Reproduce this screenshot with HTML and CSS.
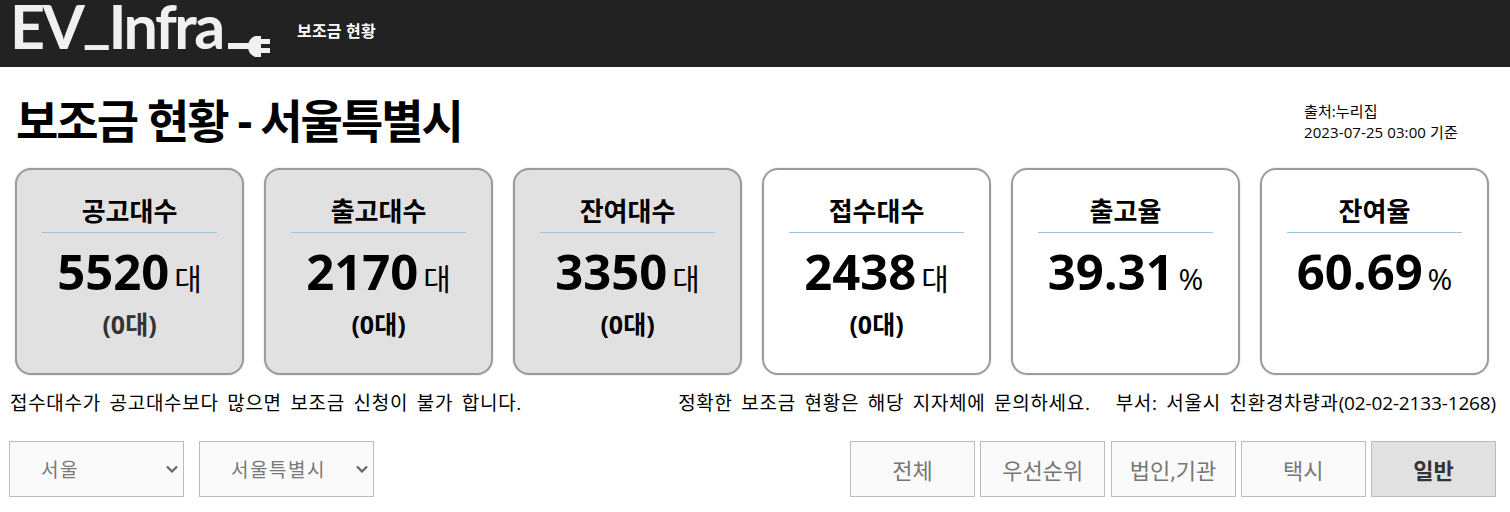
FILE: index.html
```html
<!DOCTYPE html>
<html lang="ko">
<head>
  <meta charset="UTF-8">
  <title>보조금 현황</title>
  <link rel="stylesheet" href="styles.css">
</head>
<body>
  <header class="topbar">
    <div class="logo">
      <span class="logo-text">EV<span class="logo-under">_</span>Infra</span>
      <svg class="logo-plug" width="43" height="21" viewBox="0 0 43 21">
        <path d="M0 7h22v6H0z" fill="#f0f0f0"/>
        <path d="M27 0h6v21h-6Q20 18 20 10.500Q20 3 27 0z" fill="#f0f0f0"/>
        <path d="M32 3h10v5H32zM32 12h10v5H32z" fill="#f0f0f0"/>
      </svg>
    </div>
    <a class="nav-link">보조금 현황</a>
  </header>

  <section class="title-row">
    <h1>보조금 현황 - 서울특별시</h1>
    <div class="source">
      <div>출처:누리집</div>
      <div>2023-07-25 03:00 기준</div>
    </div>
  </section>

  <section class="cards">
    <div class="card gray">
      <div class="card-title">공고대수</div>
      <div class="card-value"><b>5520</b> <span>대</span></div>
      <div class="card-sub dim">(0대)</div>
    </div>
    <div class="card gray">
      <div class="card-title">출고대수</div>
      <div class="card-value"><b>2170</b> <span>대</span></div>
      <div class="card-sub">(0대)</div>
    </div>
    <div class="card gray">
      <div class="card-title">잔여대수</div>
      <div class="card-value"><b>3350</b> <span>대</span></div>
      <div class="card-sub">(0대)</div>
    </div>
    <div class="card">
      <div class="card-title">접수대수</div>
      <div class="card-value"><b>2438</b> <span>대</span></div>
      <div class="card-sub">(0대)</div>
    </div>
    <div class="card">
      <div class="card-title">출고율</div>
      <div class="card-value"><b>39.31</b> <span>%</span></div>
    </div>
    <div class="card">
      <div class="card-title">잔여율</div>
      <div class="card-value"><b>60.69</b> <span>%</span></div>
    </div>
  </section>

  <section class="notes">
    <span>접수대수가 공고대수보다 많으면 보조금 신청이 불가 합니다.</span>
    <span class="notes-right">
      <span>정확한 보조금 현황은 해당 지자체에 문의하세요.</span>
      <span>부서: 서울시 친환경차량과<span class="phone">(02-02-2133-1268)</span></span>
    </span>
  </section>

  <section class="filters">
    <div class="selects">
      <div class="select">서울<svg width="12" height="8" viewBox="0 0 12 8"><path d="M1 1.500l5 5 5-5" fill="none" stroke="#666" stroke-width="2.200"/></svg></div>
      <div class="select">서울특별시<svg width="12" height="8" viewBox="0 0 12 8"><path d="M1 1.500l5 5 5-5" fill="none" stroke="#666" stroke-width="2.200"/></svg></div>
    </div>
    <div class="tabs">
      <div class="tab">전체</div>
      <div class="tab">우선순위</div>
      <div class="tab">법인,기관</div>
      <div class="tab">택시</div>
      <div class="tab active">일반</div>
    </div>
  </section>
</body>
</html>
```
FILE: styles.css
```css
* {
  box-sizing: border-box;
}

body {
  margin: 0;
  background: #fff;
  color: #000;
  font-family: "Open Sans", "Noto Sans CJK KR", sans-serif;
  overflow: hidden;
}

.topbar {
  height: 67px;
  background: #222;
  display: flex;
  padding-left: 10px;
}

.logo {
  display: flex;
  width: 287px;
  height: 67px;
}

.logo-text {
  font-family: "Lato", sans-serif;
  font-weight: 700;
  font-size: 61px;
  line-height: 51px;
  letter-spacing: -2.5px;
  color: #f0f0f0;
}

.logo-under {
  display: inline-block;
  transform: translateY(-8px);
}

.logo-plug {
  margin: 36px 0 0 5px;
}

.nav-link {
  color: #fff;
  font-size: 16px;
  line-height: 22px;
  margin-top: 20px;
  font-weight: 700;
  letter-spacing: 0.2px;
}

.title-row {
  height: 101px;
  display: flex;
  justify-content: space-between;
  padding: 23px 52px 0 16px;
}

h1 {
  margin: 0;
  font-size: 46px;
  line-height: 60px;
  font-weight: 700;
  letter-spacing: -2px;
}

.source {
  font-size: 15px;
  line-height: 21px;
  letter-spacing: 0.1px;
  padding-top: 11px;
  width: 154px;
  white-space: nowrap;
}

.cards {
  display: grid;
  grid-template-columns: repeat(6, 229px);
  gap: 20px;
  padding-left: 15px;
}

.card {
  height: 207px;
  border: 2px solid #989c9e;
  border-radius: 16px;
  box-shadow: 0 0 2px #0003;
  padding: 20px 25px 0;
  text-align: center;
}

.card.gray {
  background: #e1e1e1;
}

.card-title {
  font-size: 26px;
  line-height: 42px;
  font-weight: 700;
  border-bottom: 1px solid #9cc3e0;
}

.card-value {
  line-height: 76px;
  font-size: 30px;
  word-spacing: -3px;
}

.card-value b {
  font-size: 49px;
  font-weight: 700;
}

.card-sub {
  margin-top: -11px;
  font-size: 25px;
  line-height: 36px;
  font-weight: 700;
}

.card-sub.dim {
  color: #333;
}

.notes {
  display: flex;
  justify-content: space-between;
  padding: 14px 14px 0 10px;
  font-size: 19px;
  line-height: 28px;
  letter-spacing: 0.7px;
  word-spacing: 3px;
}

.notes-right {
  display: flex;
  gap: 25px;
}

.phone {
  letter-spacing: -0.15px;
}

.filters {
  display: flex;
  justify-content: space-between;
  padding: 24px 14px 0 9px;
}

.selects {
  display: flex;
  gap: 15px;
}

.select {
  width: 175px;
  height: 56px;
  background: #fafafa;
  border: 1px solid #bbb;
  color: #777;
  font-size: 19px;
  letter-spacing: 1.5px;
  display: flex;
  align-items: center;
  justify-content: space-between;
  padding: 0 5px 0 31px;
}

.tabs {
  display: flex;
  gap: 5.25px;
}

.tab {
  width: 125px;
  height: 56px;
  background: #fafafa;
  border: 1px solid #bbb;
  color: #777;
  font-size: 22px;
  display: flex;
  align-items: center;
  justify-content: center;
}

.tab.active {
  background: #e1e1e1;
  color: #333;
  font-weight: 700;
}
```
